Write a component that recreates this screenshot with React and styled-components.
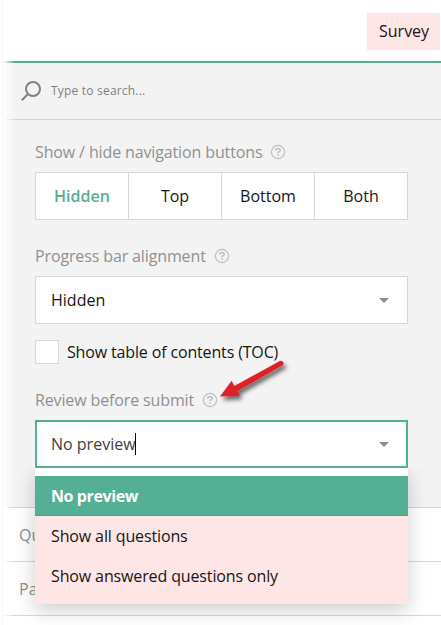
import React from 'react';
import styled, { createGlobalStyle } from 'styled-components';

const GlobalStyle = createGlobalStyle`
  *, *::before, *::after { box-sizing: border-box; }
  body {
    margin: 0;
    background: #fff;
    color: #161616;
    font: 16px/24px "Open Sans", sans-serif;
    overflow: hidden;
  }
`;

const Page = styled.div`
  position: relative;
  display: flex;
  flex-direction: column;
  width: 441px;
  height: 625px;
  padding-left: 3px;
  overflow: hidden;
`;

const EdgeFade = styled.div`
  position: absolute;
  top: 0;
  bottom: 0;
  left: 2px;
  width: 13px;
  border-left: 1px solid #f7f7f7;
  background: linear-gradient(to right, #fff, rgba(255, 255, 255, 0));
  pointer-events: none;
`;

const TopBar = styled.header`
  display: flex;
  flex: none;
  justify-content: flex-end;
  align-items: flex-start;
  height: 63px;
  padding: 13px 1px 0 0;
  border-bottom: 2px solid #54af94;
`;

const SurveyTab = styled.div`
  width: 73px;
  height: 37px;
  padding-left: 12px;
  line-height: 36px;
  background: #ffe6e6;
`;

const SearchBar = styled.div`
  display: flex;
  flex: none;
  align-items: center;
  gap: 10px;
  height: 57px;
  padding-left: 18px;
  background: #f3f3f3;
  border-bottom: 1px solid #d6d6d6;
  color: #7f7f7f;
  font-size: 12px;
  letter-spacing: 0.2px;
`;

const Settings = styled.main`
  display: flex;
  flex: none;
  flex-direction: column;
  height: 388px;
  padding: 20px 33px 0 32px;
  background: #f3f3f3;
  border-bottom: 1px solid #d6d6d6;
`;

const Label = styled.div`
  display: flex;
  align-items: center;
  gap: 8px;
  height: 24px;
  margin-top: ${(p) => p.$gap || 0}px;
  margin-bottom: 8px;
  color: #909090;
  letter-spacing: -0.13px;
`;

const ButtonGroup = styled.div`
  display: grid;
  grid-template-columns: 92px 93px 93px 93px;
  height: 48px;
  background: #fff;
  border: 1px solid #d6d6d6;
`;

const GroupButton = styled.div`
  display: flex;
  align-items: center;
  justify-content: center;
  border-left: ${(p) => (p.$active ? 'none' : '1px solid #d6d6d6')};
  color: ${(p) => (p.$active ? '#54af94' : 'inherit')};
  font-weight: ${(p) => (p.$active ? 600 : 400)};
`;

const SelectBox = styled.div`
  display: flex;
  align-items: center;
  justify-content: space-between;
  height: 48px;
  padding: 0 ${(p) => (p.$focused ? '17px 0 14px' : '18px 0 15px')};
  background: #fff;
  border: ${(p) => (p.$focused ? '2px solid #54af94' : '1px solid #d6d6d6')};
  color: ${(p) => (p.$focused ? '#404040' : 'inherit')};
`;

const Entry = styled.span`
  display: flex;
  align-items: center;
`;

const Caret = styled.span`
  width: 1px;
  height: 22px;
  margin-left: -1px;
  background: #000;
`;

const CheckRow = styled.div`
  display: flex;
  align-items: center;
  gap: 8px;
  height: 24px;
  margin-top: 16px;
  letter-spacing: -0.15px;
`;

const CheckBox = styled.span`
  width: 24px;
  height: 24px;
  background: #fff;
  border: 1px solid #d6d6d6;
`;

const Dropdown = styled.div`
  position: relative;
`;

const Popup = styled.div`
  position: absolute;
  z-index: 2;
  top: 48px;
  left: 0;
  width: 373px;
  height: 136px;
  padding-top: 8px;
  overflow: hidden;
  border-radius: 2px;
  background: linear-gradient(#fff 8px, #ffe6e6 8px);
`;

const PopupShadow = styled.div`
  position: absolute;
  z-index: 1;
  top: 48px;
  left: 0;
  width: 373px;
  height: 136px;
  border-radius: 2px;
  box-shadow: 0 6px 20px rgba(0, 0, 0, 0.2);
  clip-path: inset(0 -50px -50px -50px);
`;

const Option = styled.div`
  height: 40px;
  padding-left: 16px;
  line-height: 40px;
  background: ${(p) => (p.$selected ? '#54af94' : '#ffe6e6')};
  border-bottom: ${(p) => (p.$selected ? '1px solid #4da087' : 'none')};
  color: ${(p) => (p.$selected ? '#fff' : 'inherit')};
  font-weight: ${(p) => (p.$selected ? 700 : 400)};
  letter-spacing: ${(p) => (p.$selected ? '-0.4px' : '-0.13px')};
`;

const Category = styled.div`
  flex: none;
  height: 54px;
  padding-left: 16px;
  border-bottom: 1px solid #d6d6d6;
  line-height: 55px;
  color: #909090;
`;

const Pointer = styled.svg`
  position: absolute;
  z-index: 3;
  top: 350px;
  left: 210px;
  overflow: visible;
`;

const SearchIcon = () => (
  <svg width="20" height="20" viewBox="0 0 20 20" fill="none" stroke="#808080" strokeWidth="2">
    <circle cx="12" cy="8" r="7" />
    <path d="M7 13 .8 19.2" />
  </svg>
);

const HelpIcon = () => (
  <svg width="16" height="16" viewBox="0 0 16 16" fill="none" stroke="#bfbfbf">
    <circle cx="8" cy="8" r="6.6" strokeWidth="1.2" />
    <path d="M5.8 6.7V6.2C5.8 5 6.7 4.4 8 4.4s2.2.7 2.2 1.8c0 1.5-2.2 1.3-2.2 3.1" strokeWidth="1.5" />
    <path d="M8 10.4v1.5" strokeWidth="1.6" />
  </svg>
);

const Chevron = () => (
  <svg width="10" height="5" viewBox="0 0 10 5">
    <path d="M0 0h10L5 5z" fill="#909090" />
  </svg>
);

const ArrowMark = () => (
  <Pointer width="80" height="60" viewBox="0 0 80 60">
    <defs>
      <filter id="drop" x="-20%" y="-20%" width="150%" height="160%">
        <feDropShadow dx="2.5" dy="3.5" stdDeviation="2" floodColor="#000" floodOpacity="0.6" />
      </filter>
    </defs>
    <path
      d="M10 46.6 21.6 30.7 24.3 36 69.3 11.2Q72 10 73.2 12.3T71.8 15.8L27.3 41.2 30 45.8Z"
      fill="#dc2126"
      filter="url(#drop)"
    />
  </Pointer>
);

const placements = ['Hidden', 'Top', 'Bottom', 'Both'];
const previewModes = ['No preview', 'Show all questions', 'Show answered questions only'];

export default function App() {
  return (
    <>
      <GlobalStyle />
      <Page>
        <TopBar>
          <SurveyTab>Survey</SurveyTab>
        </TopBar>
        <SearchBar>
          <SearchIcon />
          <span>Type to search...</span>
        </SearchBar>
        <Settings>
          <Label>Show / hide navigation buttons <HelpIcon /></Label>
          <ButtonGroup>
            {placements.map((name, i) => (
              <GroupButton key={name} $active={i === 0}>{name}</GroupButton>
            ))}
          </ButtonGroup>
          <Label $gap={24}>Progress bar alignment <HelpIcon /></Label>
          <SelectBox>
            <span>Hidden</span>
            <Chevron />
          </SelectBox>
          <CheckRow>
            <CheckBox />
            <span>Show table of contents (TOC)</span>
          </CheckRow>
          <Label $gap={24}>Review before submit <HelpIcon /></Label>
          <Dropdown>
            <SelectBox $focused>
              <Entry>No preview<Caret /></Entry>
              <Chevron />
            </SelectBox>
            <PopupShadow />
            <Popup>
              {previewModes.map((name, i) => (
                <Option key={name} $selected={i === 0}>{name}</Option>
              ))}
            </Popup>
          </Dropdown>
        </Settings>
        <Category>Qu</Category>
        <Category>Pa</Category>
        <EdgeFade />
        <ArrowMark />
      </Page>
    </>
  );
}
